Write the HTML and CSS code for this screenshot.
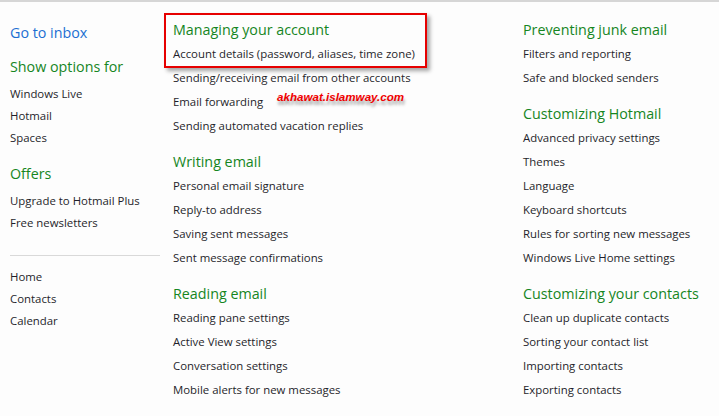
FILE: index.html
```html
<!DOCTYPE html>
<html>
<head>
<meta charset="utf-8">
<link rel="stylesheet" href="styles.css">
</head>
<body>
<div class="page">
  <nav class="side">
    <a class="inbox">Go to inbox</a>
    <h3 class="side-head first">Show options for</h3>
    <ul class="side-list">
      <li>Windows Live</li>
      <li>Hotmail</li>
      <li>Spaces</li>
    </ul>
    <h3 class="side-head">Offers</h3>
    <ul class="side-list">
      <li>Upgrade to Hotmail Plus</li>
      <li>Free newsletters</li>
    </ul>
    <hr class="divider">
    <ul class="side-list">
      <li>Home</li>
      <li>Contacts</li>
      <li>Calendar</li>
    </ul>
  </nav>
  <div class="col">
    <section class="group">
      <h3>Managing your account</h3>
      <ul>
        <li>Account details (password, aliases, time zone)</li>
        <li>Sending/receiving email from other accounts</li>
        <li>Email forwarding</li>
        <li>Sending automated vacation replies</li>
      </ul>
    </section>
    <section class="group">
      <h3>Writing email</h3>
      <ul>
        <li>Personal email signature</li>
        <li>Reply-to address</li>
        <li>Saving sent messages</li>
        <li>Sent message confirmations</li>
      </ul>
    </section>
    <section class="group">
      <h3>Reading email</h3>
      <ul>
        <li>Reading pane settings</li>
        <li>Active View settings</li>
        <li>Conversation settings</li>
        <li>Mobile alerts for new messages</li>
      </ul>
    </section>
  </div>
  <div class="col">
    <section class="group">
      <h3>Preventing junk email</h3>
      <ul>
        <li>Filters and reporting</li>
        <li>Safe and blocked senders</li>
      </ul>
    </section>
    <section class="group">
      <h3>Customizing Hotmail</h3>
      <ul>
        <li>Advanced privacy settings</li>
        <li>Themes</li>
        <li>Language</li>
        <li>Keyboard shortcuts</li>
        <li>Rules for sorting new messages</li>
        <li>Windows Live Home settings</li>
      </ul>
    </section>
    <section class="group">
      <h3>Customizing your contacts</h3>
      <ul>
        <li>Clean up duplicate contacts</li>
        <li>Sorting your contact list</li>
        <li>Importing contacts</li>
        <li>Exporting contacts</li>
      </ul>
    </section>
  </div>
</div>
<div class="highlight"></div>
<div class="watermark">akhawat.islamway.com</div>
</body>
</html>
```
FILE: styles.css
```css
html, body {
  margin: 0;
  padding: 0;
  background: #fdfdfd;
}
body {
  font-family: "Open Sans", "Noto Sans", "DejaVu Sans", sans-serif;
  color: #1f1f2b;
  border-top: 2px solid #d6d6d6;
  position: relative;
  height: 414px;
  overflow: hidden;
}
.page {
  display: grid;
  grid-template-columns: 163px 350px 1fr;
  padding-left: 10px;
  padding-top: 16px;
}
ul {
  list-style: none;
  margin: 0;
  padding: 0;
}
h3 {
  margin: 0;
  font-weight: normal;
}
.side {
  display: flex;
  flex-direction: column;
  width: 150px;
}
.inbox {
  color: #1c6fd2;
  font-size: 14.3px;
  line-height: 24px;
  margin-top: 3px;
}
.side-head {
  color: #16861f;
  font-size: 14.3px;
  line-height: 24px;
  margin-top: 13px;
  margin-bottom: 4px;
}
.side-head.first {
  margin-top: 10px;
}
.side-list li {
  font-size: 11.4px;
  line-height: 22px;
}
.divider {
  border: 0;
  border-top: 1px solid #d9d9d9;
  margin: 21px 0 10px;
  width: 150px;
}
.group {
  margin-bottom: 12px;
}
.group h3 {
  color: #16861f;
  font-size: 14.3px;
  line-height: 24px;
}
.group li {
  font-size: 11.4px;
  line-height: 24px;
}
.highlight {
  position: absolute;
  left: 164px;
  top: 11px;
  width: 259px;
  height: 51px;
  border: 2px solid #e60000;
  box-shadow: 3px 3px 4px rgba(0, 0, 0, 0.35);
}
.watermark {
  position: absolute;
  left: 277px;
  top: 88px;
  color: #f00000;
  font-family: "Liberation Sans", Arial, sans-serif;
  font-weight: bold;
  font-style: italic;
  font-size: 11.6px;
  text-shadow: 1px 4px 3px rgba(0, 0, 0, 0.35);
}
```
